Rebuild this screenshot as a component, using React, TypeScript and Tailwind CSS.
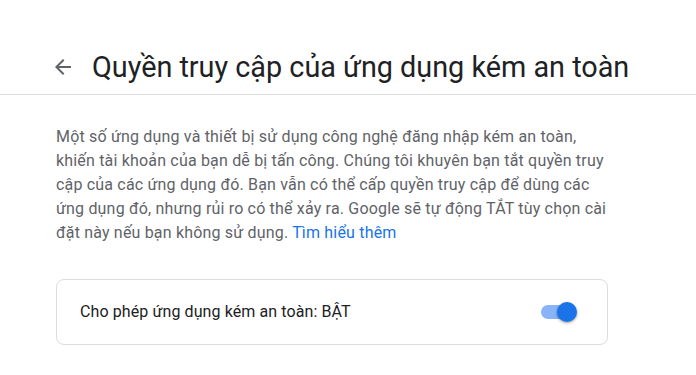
import React from 'react';

export default function App() {
  return (
    <div className="w-[696px] h-[375px] bg-white overflow-hidden" style={{ fontFamily: 'Roboto, "Noto Sans", sans-serif' }}>
      <div className="h-[95px] border-b border-[#dadce0] flex items-end">
        <div className="flex items-center pl-[51px] pb-[9px]">
          <svg width="24" height="24" viewBox="0 0 24 24" className="fill-[#5f6368]">
            <path d="M20 11H7.83l5.59-5.59L12 4l-8 8 8 8 1.41-1.41L7.83 13H20v-2z" />
          </svg>
          <h1 className="ml-[17px] text-[28.8px] leading-[36px] text-[#202124]">Quyền truy cập của ứng dụng kém an toàn</h1>
        </div>
      </div>

      <div className="w-[552px] ml-[56px] pt-[30px]">
        <p className="text-[16px] tracking-[0.18px] leading-[24px] text-[#5f6368]">
          Một số ứng dụng và thiết bị sử dụng công nghệ đăng nhập kém an toàn, khiến tài khoản của bạn dễ bị tấn công. Chúng tôi khuyên bạn tắt quyền truy cập của các ứng dụng đó. Bạn vẫn có thể cấp quyền truy cập để dùng các ứng dụng đó, nhưng rủi ro có thể xảy ra. Google sẽ tự động TẮT tùy chọn cài đặt này nếu bạn không sử dụng. <a className="text-[#1a73e8]">Tìm hiểu thêm</a>
        </p>

        <div className="mt-[34px] h-[66px] border border-[#dadce0] rounded-[8px] flex items-center justify-between pl-[23px] pr-[30px]">
          <span className="text-[16px] tracking-[0.1px] text-[#202124]">Cho phép ứng dụng kém an toàn: BẬT</span>
          <div className="relative w-[36px] h-[20px] flex items-center">
            <div className="w-[34px] h-[14px] rounded-full bg-[#8ab4f8]" />
            <div className="absolute right-0 top-0 w-[20px] h-[20px] rounded-full bg-[#1a73e8] shadow-[0_1px_3px_rgba(0,0,0,0.4)]" />
          </div>
        </div>
      </div>
    </div>
  );
}
